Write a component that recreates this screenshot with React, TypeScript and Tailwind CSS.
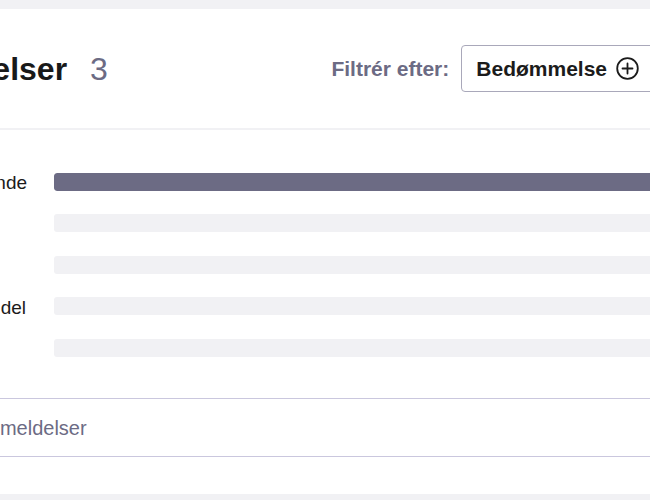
import { useState } from 'react'

const ratings = [
  { label: 'Fremragende', percent: 100 },
  { label: 'Godt', percent: 0 },
  { label: 'Middel', percent: 0 },
  { label: 'Under middel', percent: 0 },
  { label: 'Dårligt', percent: 0 },
]

function PlusCircle() {
  return (
    <svg width="23" height="23" viewBox="0 0 23 23" fill="none" stroke="#1b1b1b" strokeWidth="1.8" strokeLinecap="round">
      <circle cx="11.5" cy="11.5" r="10.3" />
      <path d="M11.5 6.5v10M6.5 11.5h10" />
    </svg>
  )
}

export default function App() {
  const [open, setOpen] = useState(false)

  return (
    <div className="w-[650px] h-[500px] overflow-hidden bg-[#f1f1f4] pt-[9px] font-['Liberation_Sans',Arial,sans-serif]">
      <div className="-ml-[150px] w-[850px] bg-white pb-[37px]">
        {/* Header */}
        <div className="h-[119px] flex items-center justify-between pl-[25px] pr-[46px]">
          <h2 className="flex items-baseline">
            <span className="text-[32px] font-bold text-[#191919] leading-none">Anmeldelser</span>
            <span className="ml-[23px] text-[32px] text-[#6c6b84] leading-none">3</span>
          </h2>
          <div className="flex items-center gap-[12px]">
            <span className="text-[21px] font-bold text-[#6c6b84]">Filtrér efter:</span>
            <button
              onClick={() => setOpen(!open)}
              className="h-[47px] flex items-center gap-[9px] pl-[14px] pr-[14px] border border-[#a9a8ba] rounded-[4px] bg-white"
            >
              <span className="text-[21px] font-bold text-[#1b1b1b]">Bedømmelse</span>
              <PlusCircle />
            </button>
          </div>
        </div>

        <div className="h-[2px] bg-[#f1f1f4]" />

        {/* Rating bars */}
        <div className="pt-[42px] pb-[41px] pl-[63px] pr-[40px] flex flex-col gap-[22.5px]">
          {ratings.map(r => (
            <div key={r.label} className="flex items-center">
              <span className="w-[141px] shrink-0 text-[19px] text-[#1b1b1b] leading-none translate-y-[1px]">{r.label}</span>
              <div className="flex-1 h-[18px] rounded-[3px] bg-[#f1f1f4] overflow-hidden">
                <div className="h-full bg-[#6c6b84] rounded-[3px]" style={{ width: `${r.percent}%` }} />
              </div>
            </div>
          ))}
        </div>

        {/* Footer link */}
        <div className="h-[59px] flex items-center border-y border-[#cac7de] pl-[61px]">
          <a href="#" className="text-[20px] text-[#6c6b84]">Se alle anmeldelser</a>
        </div>
      </div>
    </div>
  )
}
